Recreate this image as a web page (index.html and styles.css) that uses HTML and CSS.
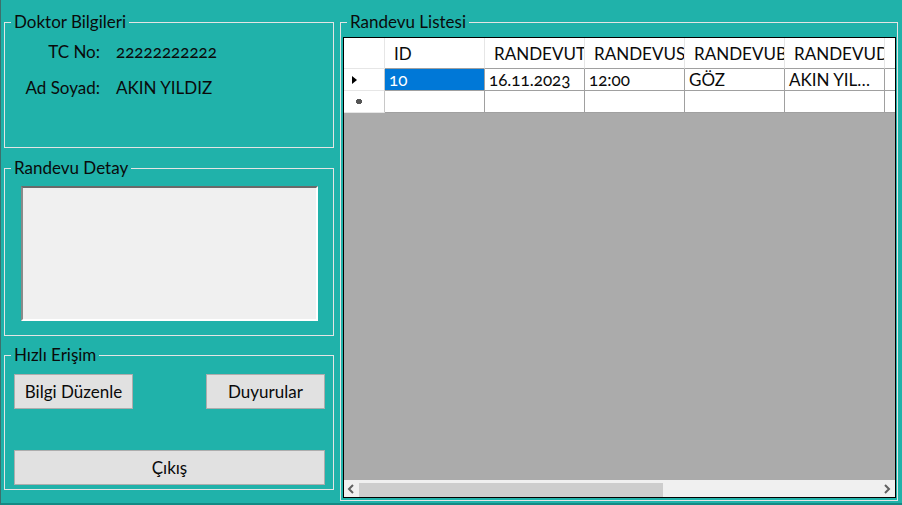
FILE: index.html
```html
<!DOCTYPE html>
<html lang="tr">
<head>
<meta charset="utf-8">
<title>Doktor Paneli</title>
<link rel="stylesheet" href="styles.css">
</head>
<body>
<div class="window">
  <div class="left-col">
    <section class="group g-doktor">
      <div class="group-title">Doktor Bilgileri</div>
      <div class="info">
        <span class="lbl">TC No:</span><span class="val">22222222222</span>
        <span class="lbl">Ad Soyad:</span><span class="val">AKIN YILDIZ</span>
      </div>
    </section>
    <section class="group g-detay">
      <div class="group-title">Randevu Detay</div>
      <div class="detail-box"></div>
    </section>
    <section class="group g-hizli">
      <div class="group-title">Hızlı Erişim</div>
      <div class="btn-row">
        <button class="btn">Bilgi Düzenle</button>
        <button class="btn">Duyurular</button>
      </div>
      <button class="btn btn-wide">Çıkış</button>
    </section>
  </div>
  <section class="group g-liste">
    <div class="group-title">Randevu Listesi</div>
    <div class="dgv">
      <div class="dgv-body">
        <table class="dgv-table">
          <colgroup>
            <col class="c-rh"><col class="c"><col class="c"><col class="c"><col class="c"><col class="c"><col class="c">
          </colgroup>
          <thead>
            <tr>
              <th class="rh"></th>
              <th>ID</th>
              <th>RANDEVUTARIH</th>
              <th>RANDEVUSAAT</th>
              <th>RANDEVUBRANS</th>
              <th>RANDEVUDOKTOR</th>
              <th>DURUM</th>
            </tr>
          </thead>
          <tbody>
            <tr>
              <td class="rh"><svg class="rh-icon" width="8" height="10" viewBox="0 0 8 10"><polygon points="2,1 7,5 2,9" fill="#000"/></svg></td>
              <td class="sel">10</td>
              <td>16.11.2023</td>
              <td>12:00</td>
              <td>GÖZ</td>
              <td class="ell">AKIN YILDIZ</td>
              <td></td>
            </tr>
            <tr>
              <td class="rh"><svg class="rh-icon star" width="10" height="8" viewBox="0 0 10 8"><rect x="3" y="1" width="4" height="5" fill="#555"/><rect x="2" y="2" width="6" height="3" fill="#555"/></svg></td>
              <td></td><td></td><td></td><td></td><td></td><td></td>
            </tr>
          </tbody>
        </table>
      </div>
      <div class="hscroll">
        <svg class="arrow" width="17" height="16" viewBox="0 0 17 16"><polyline points="9,4 5,8 9,12" fill="none" stroke="#606060" stroke-width="2"/></svg>
        <div class="track"><div class="thumb"></div></div>
        <svg class="arrow" width="17" height="16" viewBox="0 0 17 16"><polyline points="7,4 11,8 7,12" fill="none" stroke="#606060" stroke-width="2"/></svg>
      </div>
    </div>
  </section>
</div>
</body>
</html>
```
FILE: styles.css
```css
* { box-sizing: border-box; }
html, body { margin: 0; padding: 0; }
body {
  width: 902px;
  height: 505px;
  overflow: hidden;
  background: #20b2aa;
  font-family: Lato, "Noto Sans", sans-serif;
  font-size: 17px;
  color: #0a0a0a;
  font-variant-numeric: oldstyle-nums;
}
.window {
  display: flex;
  gap: 6px;
  height: 505px;
  padding-left: 4px;
  border-left: 1px solid #3d6f6c;
  border-bottom: 2px solid #148a84;
}
.left-col {
  display: flex;
  flex-direction: column;
  width: 330px;
  margin-left: -1px;
}
.group {
  border: 1px solid #e4e4e4;
}
.group-title {
  display: table;
  margin: -10px 0 0 6px;
  padding: 0 3px;
  height: 18px;
  line-height: 18px;
  background: #20b2aa;
  white-space: nowrap;
}
.g-doktor { margin-top: 22px; height: 126px; }
.g-detay { margin-top: 20px; height: 168px; }
.g-hizli { margin-top: 19px; height: 135px; }
.g-liste { margin-top: 22px; width: 558px; height: 479px; }

.info {
  display: grid;
  grid-template-columns: 95px auto;
  column-gap: 16px;
  row-gap: 18px;
  padding-top: 12px;
  line-height: 18px;
}
.lbl { text-align: right; }

.detail-box {
  margin: 9px 0 0 16px;
  width: 297px;
  height: 135px;
  background: #f0f0f0;
  border-top: 2px solid #6a6a6a;
  border-left: 2px solid #8a8a8a;
  border-right: 2px solid #ffffff;
  border-bottom: 2px solid #ffffff;
}

.btn-row {
  display: flex;
  justify-content: space-between;
  margin: 10px 0 0 9px;
  width: 311px;
}
.btn {
  display: block;
  width: 119px;
  height: 35px;
  padding: 0;
  background: #e1e1e1;
  border: 1px solid #adadad;
  font: inherit;
  color: inherit;
}
.btn-wide {
  width: 311px;
  margin: 41px 0 0 9px;
}

.dgv {
  display: flex;
  flex-direction: column;
  margin: 6px 0 0 2px;
  width: 553px;
  height: 461px;
  border: 1px solid #000;
  background: #ababab;
}
.dgv-body {
  flex: 1;
  overflow: hidden;
}
.dgv-table {
  border-collapse: separate;
  border-spacing: 0;
  table-layout: fixed;
  width: 641px;
}
.c-rh { width: 41px; }
.c { width: 100px; }
.dgv-table th, .dgv-table td {
  padding: 0;
  background: #fff;
  white-space: nowrap;
  overflow: hidden;
  font-weight: normal;
  text-align: left;
}
.dgv-table th {
  height: 31px;
  padding-left: 9px;
  border-right: 1px solid #e6e6e6;
  border-bottom: 1px solid #a0a0a0;
  text-overflow: clip;
}
.dgv-table th.rh { border-bottom-color: #e6e6e6; }
.dgv-table td {
  height: 22px;
  padding-left: 4px;
  border-right: 1px solid #a0a0a0;
  border-bottom: 1px solid #a0a0a0;
  line-height: 20px;
}
.dgv-table td.rh {
  border-bottom-color: #e6e6e6;
  border-right-color: #c8c8c8;
  vertical-align: middle;
}
.rh-icon { display: block; margin-left: 2px; }
.rh-icon.star { margin-left: 6px; }
.dgv-table td.sel { background: #0078d7; color: #fff; }
.dgv-table td.ell { text-overflow: ellipsis; padding-right: 4px; }

.hscroll {
  display: flex;
  align-items: center;
  height: 17px;
  background: #f0f0f0;
  border-top: 1px solid #f0f0f0;
}
.arrow { display: block; flex: none; }
.track { flex: 1; height: 15px; padding: 1px 0; }
.thumb { width: 304px; height: 14px; margin-left: -2px; background: #cdcdcd; }
```
